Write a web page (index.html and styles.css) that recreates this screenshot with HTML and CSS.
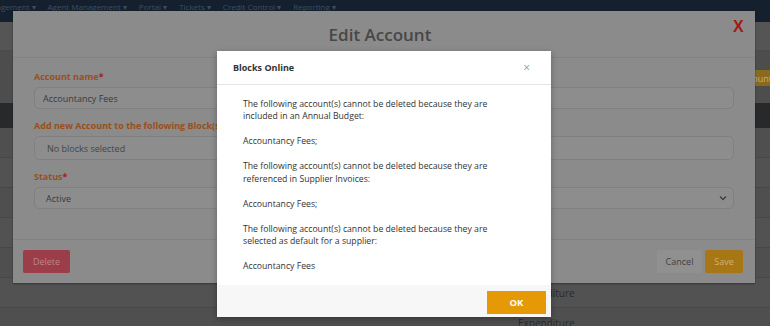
FILE: index.html
```html
<!DOCTYPE html>
<html lang="en">
<head>
    <meta charset="UTF-8">
    <meta name="viewport" content="width=device-width, initial-scale=1.0">
    <title>Edit Account</title>
    <link rel="stylesheet" href="styles.css">
</head>
<body>
    <!-- Page behind the modals -->
    <nav class="topnav">
        <ul>
            <li>Management &#9662;</li>
            <li>Agent Management &#9662;</li>
            <li>Portal &#9662;</li>
            <li>Tickets &#9662;</li>
            <li>Credit Control &#9662;</li>
            <li>Reporting &#9662;</li>
        </ul>
    </nav>

    <main class="page">
        <div class="breadcrumb"></div>
        <div class="actions">
            <button class="add-btn">Add Account</button>
        </div>
        <div class="table-head"></div>
        <div class="row"></div>
        <div class="row"></div>
        <div class="row"></div>
        <div class="row"></div>
        <div class="row"></div>
        <div class="row"><span class="cell-type">Expenditure</span></div>
        <div class="row"><span class="cell-type">Expenditure</span></div>
    </main>

    <!-- Edit account modal -->
    <div class="edit-modal">
        <div class="edit-head">
            <h2>Edit Account</h2>
            <span class="edit-close">X</span>
        </div>
        <div class="edit-form">
            <div class="field">
                <label>Account name<span class="req">*</span></label>
                <div class="input">Accountancy Fees</div>
            </div>
            <div class="field">
                <label>Add new Account to the following Block(s)</label>
                <div class="input input-tall"><span class="placeholder">No blocks selected</span></div>
            </div>
            <div class="field">
                <label>Status<span class="req">*</span></label>
                <div class="input select">
                    <span>Active</span>
                    <svg width="8" height="6" viewBox="0 0 8 6"><path d="M1 1.5 L4 4.5 L7 1.5" fill="none" stroke="#3d3d3d" stroke-width="1.3"/></svg>
                </div>
            </div>
        </div>
        <div class="edit-foot">
            <button class="btn-delete">Delete</button>
            <div class="foot-right">
                <button class="btn-cancel">Cancel</button>
                <button class="btn-save">Save</button>
            </div>
        </div>
    </div>

    <!-- Alert dialog -->
    <div class="dialog">
        <div class="dialog-head">
            <h3>Blocks Online</h3>
            <span class="dialog-close">&times;</span>
        </div>
        <div class="dialog-body">
            <p>The following account(s) cannot be deleted because they are included in an Annual Budget:</p>
            <p>Accountancy Fees;</p>
            <p>The following account(s) cannot be deleted because they are referenced in Supplier Invoices:</p>
            <p>Accountancy Fees;</p>
            <p>The following account(s) cannot be deleted because they are selected as default for a supplier:</p>
            <p>Accountancy Fees</p>
        </div>
        <div class="dialog-foot">
            <button class="btn-ok">OK</button>
        </div>
    </div>
</body>
</html>
```

FILE: styles.css
```css
body {
    margin: 0;
    background-color: #4f4f4f;
    font-family: 'Open Sans', sans-serif;
    overflow: hidden;
}

button {
    font-family: 'Open Sans', sans-serif;
    border: none;
    cursor: pointer;
}

/* page behind */
.topnav {
    background-color: #15202e;
    height: 22px;
    overflow: hidden;
}

.topnav ul {
    list-style: none;
    margin: 0 0 0 -20px;
    padding: 1px 0 0;
    display: flex;
    gap: 12px;
}

.topnav li {
    font-size: 8px;
    line-height: 11px;
    color: #3d4d64;
    white-space: nowrap;
}

.breadcrumb {
    height: 28px;
    background-color: #555555;
    border-bottom: 1px solid #4a4a4a;
}

.actions {
    height: 52px;
    background-color: #4d4d4d;
    display: flex;
    justify-content: flex-end;
    align-items: center;
    padding: 2px 0 0;
    box-sizing: border-box;
    overflow: hidden;
}

.add-btn {
    flex-shrink: 0;
    background-color: #8a6a1e;
    color: #c9b07a;
    font-size: 9px;
    height: 16px;
    padding: 0 4px;
    margin-right: -6px;
    white-space: nowrap;
}

.table-head {
    height: 25px;
    background-color: #27292b;
}

.row {
    height: 30px;
    border-bottom: 1px solid #474747;
    box-sizing: border-box;
    background-color: #4f4f4f;
    display: flex;
    align-items: center;
}

.row:nth-child(odd) {
    background-color: #525252;
}

.cell-type {
    margin-left: 518px;
    font-size: 10px;
    color: #2a2a2a;
}

/* edit modal */
.edit-modal {
    position: absolute;
    left: 13px;
    top: 11px;
    width: 742px;
    height: 272px;
    background-color: #8b8b8b;
    box-shadow: 0 1px 2px rgba(0, 0, 0, 0.35);
    display: flex;
    flex-direction: column;
}

.edit-head {
    height: 46px;
    border-bottom: 1px solid #818181;
    display: flex;
    align-items: center;
    justify-content: center;
    position: relative;
}

.edit-head h2 {
    margin: 0 8px 0 0;
    font-size: 17px;
    font-weight: 600;
    color: #474747;
}

.edit-close {
    position: absolute;
    left: 720px;
    top: 7px;
    font-family: 'Liberation Sans', sans-serif;
    font-size: 16px;
    font-weight: bold;
    color: #a51818;
}

.edit-form {
    flex: 1;
    padding: 12px 21px 0;
}

.field {
    margin-bottom: 10px;
}

.field label {
    display: block;
    font-size: 9px;
    font-weight: 700;
    line-height: 13px;
    margin-bottom: 4px;
    color: #9a4f1c;
}

.req {
    color: #a3201c;
}

.input {
    height: 22px;
    box-sizing: border-box;
    border: 1px solid #808080;
    border-radius: 5px;
    background-color: #8d8d8d;
    font-size: 9px;
    color: #3a3a3a;
    display: flex;
    align-items: center;
    padding: 0 8px;
}

.input-tall {
    height: 24px;
}

.placeholder {
    margin-left: 4px;
    color: #464646;
}

.select {
    justify-content: space-between;
    padding: 0 6px 0 11px;
}

.edit-foot {
    height: 44px;
    border-top: 1px solid #818181;
    display: flex;
    justify-content: space-between;
    align-items: flex-start;
    padding: 10px 12px 0 10px;
    box-sizing: border-box;
}

.foot-right {
    display: flex;
    gap: 3px;
}

.edit-foot button {
    height: 23px;
    font-size: 9px;
    border-radius: 2px;
}

.btn-delete {
    width: 47px;
    background-color: #9c3d4a;
    color: #c0848b;
}

.btn-cancel {
    width: 45px;
    background-color: #909090;
    color: #424242;
}

.btn-save {
    width: 38px;
    background-color: #a67714;
    color: #d1b172;
}

/* alert dialog */
.dialog {
    position: absolute;
    left: 217px;
    top: 51px;
    width: 334px;
    height: 266px;
    background: white;
    box-shadow: 0 2px 6px rgba(0, 0, 0, 0.3);
    display: flex;
    flex-direction: column;
}

.dialog-head {
    height: 35px;
    border-bottom: 1px solid #e5e5e5;
    display: flex;
    align-items: center;
    justify-content: space-between;
    padding: 0 21px 0 16px;
}

.dialog-head h3 {
    margin: 0;
    font-size: 9px;
    font-weight: 700;
    color: #333;
}

.dialog-close {
    font-size: 12px;
    color: #9a9a9a;
}

.dialog-body {
    flex: 1;
    padding: 13px 56px 0 26px;
}

.dialog-body p {
    margin: 0 0 12.5px;
    font-size: 8.7px;
    line-height: 12.5px;
    color: #333;
}

.dialog-foot {
    height: 34px;
    background-color: #f7f7f7;
    display: flex;
    justify-content: flex-end;
    padding: 6px 5px 0 0;
    box-sizing: border-box;
}

.btn-ok {
    width: 59px;
    height: 23px;
    background-color: #e59a05;
    color: white;
    font-weight: 700;
    font-size: 9.5px;
}
```
